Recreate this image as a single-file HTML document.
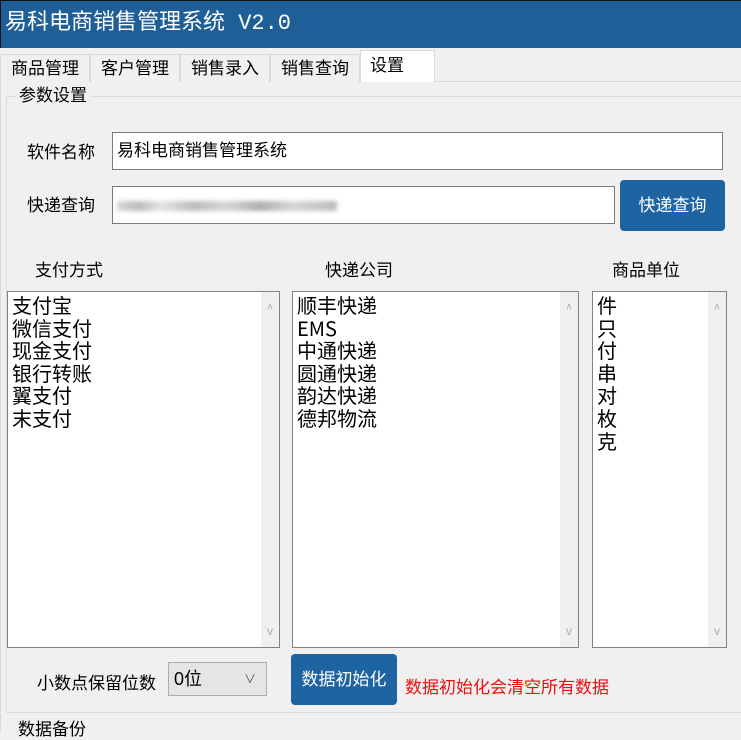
<!DOCTYPE html>
<html><head><meta charset="utf-8"><style>
*{margin:0;padding:0;box-sizing:border-box}
body{width:741px;height:731px;overflow:hidden;background:#f0f0f0;font-family:"Liberation Sans","Noto Sans CJK SC",sans-serif;position:relative;color:#000}
.a{position:absolute}
.title{left:0;top:0;width:741px;height:48px;background:#1f5f97;color:#fff;font-size:22px;line-height:46px;padding-left:4px;font-family:"Liberation Mono","Noto Sans CJK SC",monospace;border-left:1px solid #111;border-top:1px solid #111}
.tabbar{left:0;top:48px;width:741px;height:34px;background:#f0f0f0;border-bottom:1px solid #d9d9d9}
.tab{top:54px;height:28px;border:1px solid #d9d9d9;border-bottom:none;font-size:17px;line-height:28px;text-align:center;background:#f0f0f0}
.tab.sel{top:50px;height:33px;background:#fff;line-height:30px;text-align:left;padding-left:9px}
.lbl{font-size:17px;line-height:20px}
.inp{background:#fff;border:1px solid #7a7a7a;font-size:17px;padding-left:4px}
.btn{background:#1e64a3;color:#fff;border-radius:4px;font-size:17px;text-align:center}
.list{background:#fff;border:1px solid #828282;font-size:20px;line-height:22.6px;padding:2px 0 0 4px;font-family:"Noto Sans CJK SC",sans-serif}
.sb{position:absolute;right:0;top:0;width:18px;height:100%;background:#f0f0f0;color:#aaa;font-size:12px;text-align:center}
.sb span{position:absolute;left:0;width:18px}
</style></head><body>
<div class="a title">易科电商销售管理系统 V2.0</div>
<div class="a tabbar"></div>
<div class="a tab" style="left:0;width:90px">商品管理</div>
<div class="a tab" style="left:90px;width:90px">客户管理</div>
<div class="a tab" style="left:180px;width:90px">销售录入</div>
<div class="a tab" style="left:270px;width:90px">销售查询</div>
<div class="a tab sel" style="left:360px;width:75px">设置</div>
<div class="a" style="left:0;top:82px;width:741px;height:649px;background:#f0f0f0;border-left:1px solid #d9d9d9"></div>
<div class="a" style="left:6px;top:96px;width:745px;height:617px;border:1px solid #dcdcdc"></div>
<div class="a lbl" style="left:16px;top:86px;padding:0 3px;background:#f0f0f0">参数设置</div>
<div class="a lbl" style="left:27px;top:143px">软件名称</div>
<div class="a inp" style="left:112px;top:132px;width:611px;height:38px;line-height:36px">易科电商销售管理系统</div>
<div class="a lbl" style="left:27px;top:196px">快递查询</div>
<div class="a inp" style="left:112px;top:186px;width:503px;height:38px"><div style="position:absolute;left:4px;top:14px;width:220px;height:10px;background:linear-gradient(90deg,#ccc,#aaa 10%,#ddd 20%,#aaa 35%,#ccc 50%,#999 65%,#ccc 80%,#aaa);filter:blur(2px);opacity:.8"></div></div>
<div class="a btn" style="left:620px;top:180px;width:105px;height:51px;line-height:51px">快递查询</div>
<div class="a lbl" style="left:35px;top:261px">支付方式</div>
<div class="a lbl" style="left:325px;top:261px">快递公司</div>
<div class="a lbl" style="left:612px;top:261px">商品单位</div>
<div class="a list" style="left:7px;top:291px;width:273px;height:357px">支付宝<br>微信支付<br>现金支付<br>银行转账<br>翼支付<br>末支付<div class="sb"><span style="top:6px">^</span><span style="bottom:4px">v</span></div></div>
<div class="a list" style="left:292px;top:291px;width:287px;height:357px">顺丰快递<br>EMS<br>中通快递<br>圆通快递<br>韵达快递<br>德邦物流<div class="sb"><span style="top:6px">^</span><span style="bottom:4px">v</span></div></div>
<div class="a list" style="left:592px;top:291px;width:135px;height:357px">件<br>只<br>付<br>串<br>对<br>枚<br>克<div class="sb"><span style="top:6px">^</span><span style="bottom:4px">v</span></div></div>
<div class="a lbl" style="left:37px;top:674px">小数点保留位数</div>
<div class="a" style="left:168px;top:662px;width:99px;height:34px;background:#e5e5e5;border:1px solid #adadad;font-size:18px;line-height:32px;padding-left:5px">0位<span style="position:absolute;right:10px;top:0;font-size:12px;color:#555">&#8744;</span></div>
<div class="a btn" style="left:291px;top:654px;width:106px;height:51px;line-height:51px">数据初始化</div>
<div class="a" style="left:405px;top:673px;font-size:17px;color:#e81010">数据初始化会清空所有数据</div>
<div class="a lbl" style="left:18px;top:720px">数据备份</div>
</body></html>
